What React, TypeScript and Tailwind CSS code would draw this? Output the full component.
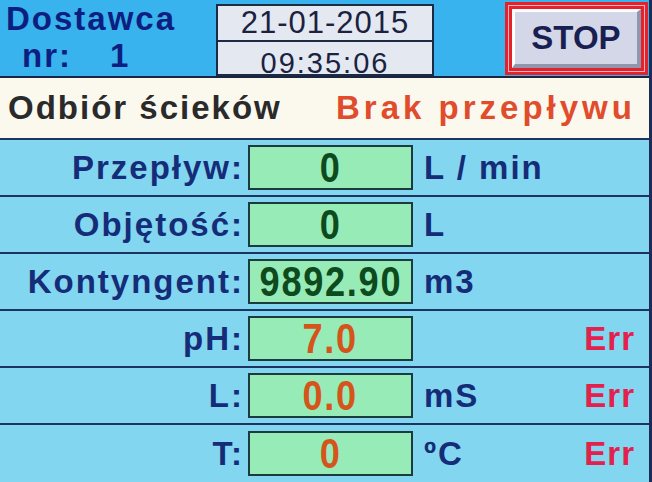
const rows = [
  { label: 'Przepływ:', value: '0', unit: 'L / min', tone: 'ok', err: false },
  { label: 'Objętość:', value: '0', unit: 'L', tone: 'ok', err: false },
  { label: 'Kontyngent:', value: '9892.90', unit: 'm3', tone: 'ok', err: false },
  { label: 'pH:', value: '7.0', unit: '', tone: 'bad', err: true },
  { label: 'L:', value: '0.0', unit: 'mS', tone: 'bad', err: true },
  { label: 'T:', value: '0', unit: 'ºC', tone: 'bad', err: true },
];

function MeasureRow({ row, last }: { row: (typeof rows)[number]; last: boolean }) {
  return (
    <div
      className={`flex items-center bg-[#82d6ef] ${
        last ? 'h-[57px]' : 'h-[57px] border-b-2 border-[#1d3360]'
      }`}
    >
      <div className="w-[248px] pr-[4px] text-right text-[33px] font-bold tracking-[2px] text-[#152c78]">
        {row.label}
      </div>
      <div className="flex h-[45px] w-[165px] items-center justify-center border-2 border-[#1b3b3e] bg-[#97ebb6]">
        <span
          className={`inline-block scale-x-[0.86] text-[42px] leading-none font-bold tracking-[2px] ${
            row.tone === 'ok' ? 'text-[#0d4a1d]' : 'text-[#d5541c]'
          }`}
        >
          {row.value}
        </span>
      </div>
      <div className="ml-[11px] flex-1 text-[33px] font-bold tracking-[2px] text-[#152c78]">
        {row.unit}
      </div>
      {row.err && (
        <div className="pr-[14px] text-[33px] font-bold tracking-[1px] text-[#e2214d]">Err</div>
      )}
    </div>
  );
}

export default function App() {
  return (
    <div className="h-[482px] w-[652px] overflow-hidden border-r-[3px] border-[#1c2b58] font-['Liberation_Sans',Arial,sans-serif]">
      {/* Header: supplier, date / time, stop */}
      <div className="flex h-[78px] border-b-2 border-[#1a2540] bg-[#38b3ee]">
        <div className="w-[216px] pl-[6px] text-[33px] font-bold tracking-[2px] text-[#0c1f80]">
          <div className="h-[37px] leading-[37px]">Dostawca</div>
          <div className="flex h-[37px] leading-[37px]">
            <span className="ml-[16px] w-[88px]">nr:</span>
            <span>1</span>
          </div>
        </div>
        <div className="mt-[4px] flex h-[72px] w-[218px] flex-col border-2 border-[#1c2a44] bg-[#e4e8f1] text-[#1a2240]">
          <div className="flex h-[36px] items-center justify-center border-b-2 border-[#1c2a44] text-[31px] tracking-[1px]">
            21-01-2015
          </div>
          <div className="flex flex-1 items-center justify-center text-[29px] tracking-[2px]">
            09:35:06
          </div>
        </div>
        <div className="w-[71px]" />
        <div className="mt-[2px] h-[73px] w-[143px] border-[3px] border-[#e5222c] bg-[#e5222c]">
          <div className="h-full w-full border border-[#f3b2c0] p-[3px]">
            <div className="flex h-full w-full items-center justify-center border-t-[3px] border-l-[3px] border-r-[4px] border-b-[4px] border-t-white border-l-white border-r-[#8f96ae] border-b-[#8f96ae] bg-[#d3d7e8]">
              <span className="text-[33px] font-bold text-[#1a1f52]">STOP</span>
            </div>
          </div>
        </div>
      </div>

      {/* Status line */}
      <div className="flex h-[62px] items-center border-b-2 border-[#1d3360] bg-[#fbf8ee] text-[33px] font-bold tracking-[2px]">
        <span className="ml-[8px] w-[328px] text-[#2a2a2a]">Odbiór ścieków</span>
        <span className="text-[#e04c2c] tracking-[4px]">Brak przepływu</span>
      </div>

      {rows.map((row, i) => (
        <MeasureRow key={row.label} row={row} last={i === rows.length - 1} />
      ))}
    </div>
  );
}
